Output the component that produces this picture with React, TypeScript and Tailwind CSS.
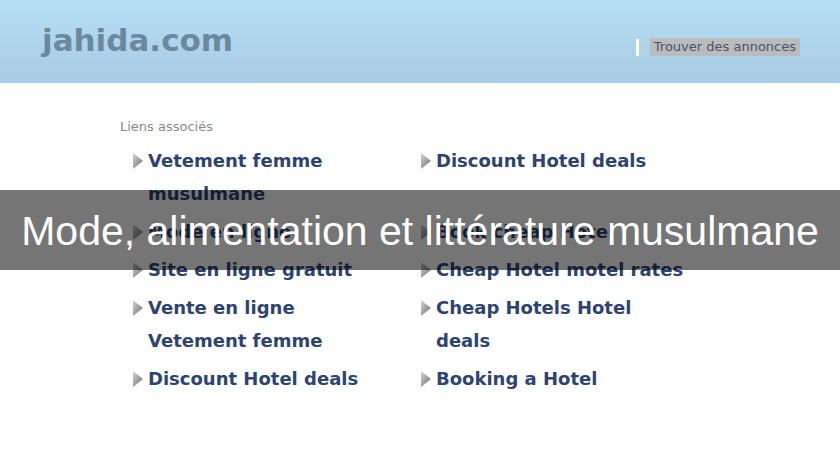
import React from "react";

// lignes de liens (gauche, droite) — le tableau aligne les rangées
const rows: [string, string][] = [
  ["Vetement femme musulmane", "Discount Hotel deals"],
  ["Mode en ligne", "Book cheap Hotel"],
  ["Site en ligne gratuit", "Cheap Hotel motel rates"],
  ["Vente en ligne Vetement femme", "Cheap Hotels Hotel deals"],
  ["Discount Hotel deals", "Booking a Hotel"],
];

function Arrow() {
  return (
    <svg width="12" height="18" viewBox="0 0 12 18" className="shrink-0 mt-[8px]">
      <defs>
        <linearGradient id="arr" x1="0" y1="0" x2="1" y2="1">
          <stop offset="0" stopColor="#d4d4d4" />
          <stop offset="1" stopColor="#707070" />
        </linearGradient>
      </defs>
      <polygon points="1,1 11,9 1,17" fill="url(#arr)" />
    </svg>
  );
}

function LinkItem({ label }: { label: string }) {
  return (
    <div className="flex gap-[4px] items-start">
      <Arrow />
      <a className="w-[249px] text-[18px] font-bold leading-[33px] text-[#2e4372] cursor-pointer">
        {label}
      </a>
    </div>
  );
}

export default function App() {
  return (
    <div
      className="relative w-[840px] h-[460px] overflow-hidden bg-white"
      style={{ fontFamily: '"DejaVu Sans", sans-serif' }}
    >
      {/* En-tête bleu */}
      <div className="h-[83px] bg-gradient-to-b from-[#b6dff5] to-[#a7cbe4] flex items-start justify-between pl-[42px] pr-[40px]">
        <div className="text-[31px] font-bold text-[#6a899f] mt-[20px] leading-[41px]">jahida.com</div>
        <div className="flex items-center mt-[38px] gap-[11px]">
          <div className="w-[3px] h-[17px] bg-white" />
          <div className="bg-[#b9bbbd] text-[13px] text-[#4b5169] h-[18px] leading-[18px] px-[4px]">
            Trouver des annonces
          </div>
        </div>
      </div>
      <div className="h-px bg-[#fbfdf4]" />

      {/* Liens associés */}
      <div className="pl-[120px] pt-[34px]">
        <div className="text-[13px] text-[#8a8a8a] leading-[17px]">Liens associés</div>
        <div className="pl-[12px] pt-[9px] grid grid-cols-[288px_288px] gap-y-[5px]">
          {rows.map(([l, r], i) => (
            <React.Fragment key={i}>
              <LinkItem label={l} />
              <LinkItem label={r} />
            </React.Fragment>
          ))}
        </div>
      </div>

      {/* Bandeau titre par-dessus */}
      <div className="absolute left-0 right-0 top-[190px] h-[80px] bg-[#000000]/[0.54] flex items-center justify-center">
        <div
          className="text-white text-[41px] leading-[46px] pt-[1px]"
          style={{ fontFamily: '"Liberation Sans", Arial, sans-serif' }}
        >
          Mode, alimentation et littérature musulmane
        </div>
      </div>
    </div>
  );
}
